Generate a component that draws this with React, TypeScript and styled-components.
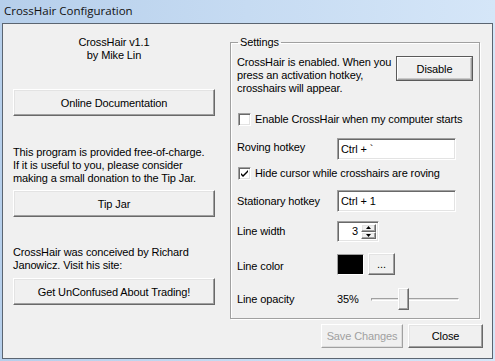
import React from 'react';
import styled, { createGlobalStyle, css } from 'styled-components';

const GlobalStyle = createGlobalStyle`
  html, body {
    margin: 0;
    padding: 0;
    background: #c9dcf2;
  }
  body {
    font-family: 'Liberation Sans', Arial, sans-serif;
    font-size: 11px;
    letter-spacing: -0.12px;
    color: #000;
  }
`;

const raised = css`
  border: 1px solid;
  border-color: #fff #696969 #696969 #fff;
  box-shadow: inset -1px -1px #a0a0a0, inset 1px 1px #e3e3e3;
`;

const sunken = css`
  border: 1px solid;
  border-color: #a0a0a0 #fff #fff #a0a0a0;
  box-shadow: inset 1px 1px #696969, inset -1px -1px #e3e3e3;
`;

const Window = styled.div`
  width: 495px;
  height: 361px;
  display: flex;
  flex-direction: column;
  background: linear-gradient(90deg, #b6cfeb 0%, #c6dbf2 50%, #d5e6f8 100%);
  box-sizing: border-box;
  padding: 0 2px 2px 2px;
`;

const TitleBar = styled.div`
  height: 23px;
  display: flex;
  align-items: center;
  padding-left: 2px;
  padding-bottom: 2px;
  box-sizing: border-box;
  font-family: 'Open Sans', 'Noto Sans', sans-serif;
  font-size: 11.5px;
  color: #111;
  letter-spacing: 0;
`;

const Client = styled.div`
  flex: 1;
  background: #f0f0f0;
  border: 1px solid #5b6571;
  display: flex;
  gap: 15px;
  padding: 0 10px 10px 10px;
`;

const LeftColumn = styled.div`
  width: 202px;
  display: flex;
  flex-direction: column;
  padding-top: 12px;
  line-height: 13px;
`;

const Centered = styled.div`
  text-align: center;
`;

const Text = styled.div<{ $mt: number }>`
  margin-top: ${p => p.$mt}px;
  white-space: nowrap;
`;

const Button = styled.button<{ $w?: number; $h?: number; $mt?: number; $default?: boolean }>`
  ${raised};
  background: #f0f0f0;
  font-family: 'Liberation Sans', Arial, sans-serif;
  font-size: 11px;
  letter-spacing: -0.12px;
  color: #000;
  padding: 0;
  width: ${p => (p.$w ? `${p.$w}px` : '100%')};
  height: ${p => p.$h ?? 27}px;
  margin-top: ${p => p.$mt ?? 0}px;
  flex-shrink: 0;
  ${p =>
    p.$default &&
    css`
      outline: 1px solid #5a5a5a;
      outline-offset: 0;
      border-color: #fff #a0a0a0 #a0a0a0 #fff;
      box-shadow: inset -1px -1px #c8c8c8;
    `}
  &:disabled {
    color: #a0a0a0;
    border-color: #fff #a0a0a0 #a0a0a0 #fff;
    box-shadow: inset -1px -1px #dcdcdc;
  }
`;

const RightColumn = styled.div`
  flex: 1;
  display: flex;
  flex-direction: column;
  padding-top: 12px;
`;

const GroupBox = styled.fieldset`
  margin: 0;
  width: 250px;
  box-sizing: border-box;
  border: 1px solid #a0a0a0;
  box-shadow: inset 1px 1px #fff, 1px 1px 0 #fff;
  padding: 0 6px 8px 6px;
  line-height: 13px;
`;

const Legend = styled.legend`
  padding: 0 2px;
  margin-left: 1px;
  line-height: 13px;
`;

const Row = styled.div<{ $mt: number; $h: number }>`
  display: flex;
  align-items: center;
  margin-top: ${p => p.$mt}px;
  height: ${p => p.$h}px;
`;

const InfoRow = styled.div`
  display: flex;
  justify-content: space-between;
  align-items: flex-start;
  margin-top: 7px;
  white-space: nowrap;
`;

const FieldLabel = styled.div<{ $dy?: number }>`
  width: 100px;
  flex-shrink: 0;
  position: relative;
  top: ${p => p.$dy ?? 0}px;
`;

const TextField = styled.div`
  ${sunken};
  background: #fff;
  width: 119px;
  height: 22px;
  box-sizing: border-box;
  display: flex;
  align-items: center;
  padding-left: 3px;
`;

const CheckLabel = styled.label`
  display: flex;
  align-items: center;
  gap: 4px;
  margin-left: 1px;
`;

const CheckBox = styled.span`
  ${sunken};
  width: 13px;
  height: 13px;
  box-sizing: border-box;
  background: #fff;
  display: inline-flex;
  align-items: center;
  justify-content: center;
`;

const Spin = styled.div`
  ${sunken};
  background: #fff;
  width: 42px;
  height: 21px;
  box-sizing: border-box;
  display: flex;
  align-items: center;
  padding: 2px 2px 2px 0;
`;

const SpinValue = styled.div`
  flex: 1;
  text-align: right;
  padding-right: 3px;
`;

const SpinButtons = styled.div`
  display: flex;
  flex-direction: column;
  width: 15px;
  height: 100%;
`;

const SpinButton = styled.div`
  ${raised};
  flex: 1;
  background: #f0f0f0;
  display: flex;
  align-items: center;
  justify-content: center;
`;

const Swatch = styled.div<{ $color: string }>`
  width: 27px;
  height: 21px;
  box-sizing: border-box;
  background: ${p => p.$color};
  border: 1px solid;
  border-color: #a0a0a0 #fff #fff #a0a0a0;
  margin-right: 4px;
`;

const Slider = styled.div`
  position: relative;
  width: 88px;
  height: 22px;
  margin-left: 12px;
  display: flex;
  align-items: center;
`;

const Track = styled.div`
  width: 100%;
  height: 3px;
  box-sizing: border-box;
  border: 1px solid;
  border-color: #a0a0a0 #fff #fff #a0a0a0;
  background: #e3e3e3;
`;

const Thumb = styled.div`
  ${raised};
  position: absolute;
  top: 0;
  width: 11px;
  height: 22px;
  box-sizing: border-box;
  background: #f0f0f0;
`;

const Footer = styled.div`
  display: flex;
  justify-content: flex-end;
  gap: 5px;
  margin-top: 5px;
  margin-right: -1px;
`;

const Check = () => (
  <svg width="9" height="9" viewBox="0 0 9 9">
    <path d="M1 4 L3 6 L8 1 L8 3 L3 8 L1 6 Z" fill="#000" />
  </svg>
);

const Arrow = ({ up }: { up: boolean }) => (
  <svg width="5" height="3" viewBox="0 0 5 3">
    <path d={up ? 'M2.5 0 L5 3 L0 3 Z' : 'M0 0 L5 0 L2.5 3 Z'} fill="#000" />
  </svg>
);

const opacity = 35;

const App = () => {
  return (
    <>
      <GlobalStyle />
      <Window>
        <TitleBar>CrossHair Configuration</TitleBar>
        <Client>
          <LeftColumn>
            <Centered>
              CrossHair v1.1
              <br />
              by Mike Lin
            </Centered>
            <Button $mt={27}>Online Documentation</Button>
            <Text $mt={30}>
              This program is provided free-of-charge.
              <br />
              If it is useful to you, please consider
              <br />
              making a small donation to the Tip Jar.
            </Text>
            <Button $mt={5}>Tip Jar</Button>
            <Text $mt={29}>
              CrossHair was conceived by Richard
              <br />
              Janowicz. Visit his site:
            </Text>
            <Button $mt={6}>Get UnConfused About Trading!</Button>
          </LeftColumn>

          <RightColumn>
            <GroupBox>
              <Legend>Settings</Legend>
              <InfoRow>
                <div>
                  CrossHair is enabled. When you
                  <br />
                  press an activation hotkey,
                  <br />
                  crosshairs will appear.
                </div>
                <Button $w={75} $h={23} $mt={1} $default style={{ marginRight: 1 }}>
                  Disable
                </Button>
              </InfoRow>
              <Row $mt={14} $h={20}>
                <CheckLabel>
                  <CheckBox />
                  Enable CrossHair when my computer starts
                </CheckLabel>
              </Row>
              <Row $mt={9} $h={22}>
                <FieldLabel $dy={-2}>Roving hotkey</FieldLabel>
                <TextField>Ctrl + `</TextField>
              </Row>
              <Row $mt={3} $h={20}>
                <CheckLabel>
                  <CheckBox>
                    <Check />
                  </CheckBox>
                  Hide cursor while crosshairs are roving
                </CheckLabel>
              </Row>
              <Row $mt={7} $h={22}>
                <FieldLabel>Stationary hotkey</FieldLabel>
                <TextField>Ctrl + 1</TextField>
              </Row>
              <Row $mt={9} $h={21}>
                <FieldLabel>Line width</FieldLabel>
                <Spin>
                  <SpinValue>3</SpinValue>
                  <SpinButtons>
                    <SpinButton>
                      <Arrow up />
                    </SpinButton>
                    <SpinButton>
                      <Arrow up={false} />
                    </SpinButton>
                  </SpinButtons>
                </Spin>
              </Row>
              <Row $mt={11} $h={22}>
                <FieldLabel $dy={2}>Line color</FieldLabel>
                <Swatch $color="#000" />
                <Button $w={27} $h={22}>...</Button>
              </Row>
              <Row $mt={13} $h={22}>
                <FieldLabel>Line opacity</FieldLabel>
                <span>{opacity}%</span>
                <Slider>
                  <Track />
                  <Thumb style={{ left: `${Math.round((opacity / 100) * 77)}px` }} />
                </Slider>
              </Row>
            </GroupBox>
            <Footer>
              <Button $w={82} $h={24} disabled>
                Save Changes
              </Button>
              <Button $w={75} $h={24}>
                Close
              </Button>
            </Footer>
          </RightColumn>
        </Client>
      </Window>
    </>
  );
};

export default App;
